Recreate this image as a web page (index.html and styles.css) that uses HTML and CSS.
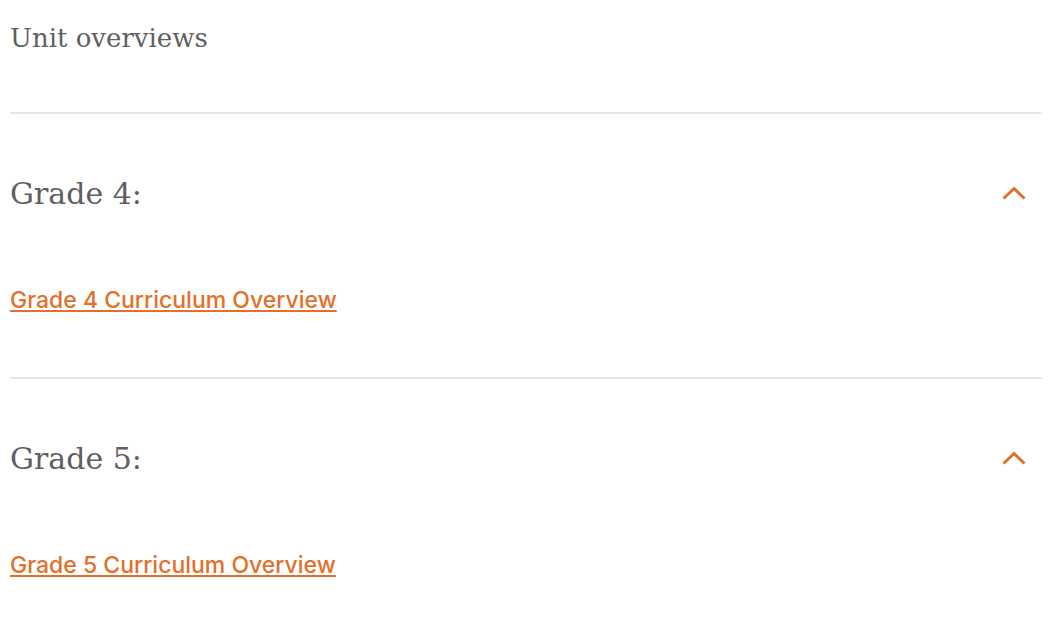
FILE: index.html
```html
<!DOCTYPE html>
<html lang="en">
<head>
    <meta charset="UTF-8">
    <meta name="viewport" content="width=device-width, initial-scale=1.0">
    <title>Unit overviews</title>
    <link rel="stylesheet" href="styles.css">
</head>
<body>
    <div class="overviews">
        <h2 class="overviews-title">Unit overviews</h2>

        <div class="accordion-item">
            <div class="accordion-header">
                <h3>Grade 4:</h3>
                <svg class="chevron" width="24" height="14" viewBox="0 0 24 14">
                    <polyline points="1.5,12.5 12,2.5 22.5,12.5" fill="none" stroke="#e2702a" stroke-width="3"/>
                </svg>
            </div>
            <div class="accordion-body">
                <a href="#">Grade 4 Curriculum Overview</a>
            </div>
        </div>

        <div class="accordion-item">
            <div class="accordion-header">
                <h3>Grade 5:</h3>
                <svg class="chevron" width="24" height="14" viewBox="0 0 24 14">
                    <polyline points="1.5,12.5 12,2.5 22.5,12.5" fill="none" stroke="#e2702a" stroke-width="3"/>
                </svg>
            </div>
            <div class="accordion-body">
                <a href="#">Grade 5 Curriculum Overview</a>
            </div>
        </div>
    </div>
</body>
</html>
```

FILE: styles.css
```css
* {
    margin: 0;
    padding: 0;
    box-sizing: border-box;
}

body {
    background: #fff;
    font-family: 'DejaVu Serif', serif;
    color: #5f5f5f;
}

.overviews {
    padding: 0 10px;
}

.overviews-title {
    font-size: 26px;
    font-weight: normal;
    line-height: 34px;
    padding-top: 21px;
    padding-bottom: 57px;
    border-bottom: 2px solid #e6e6e6;
}

.accordion-item {
    border-bottom: 2px solid #e6e6e6;
}

.accordion-header {
    display: flex;
    align-items: center;
    justify-content: space-between;
    height: 158px;
}

.accordion-header h3 {
    font-size: 30px;
    font-weight: normal;
}

.chevron {
    margin-right: 16px;
}

.accordion-body {
    height: 105px;
    padding-top: 13px;
    line-height: 30px;
}

.accordion-body a {
    font-family: 'Inter', 'Liberation Sans', sans-serif;
    font-size: 23px;
    font-weight: 500;
    color: #e2702a;
    text-decoration: underline;
}
```
